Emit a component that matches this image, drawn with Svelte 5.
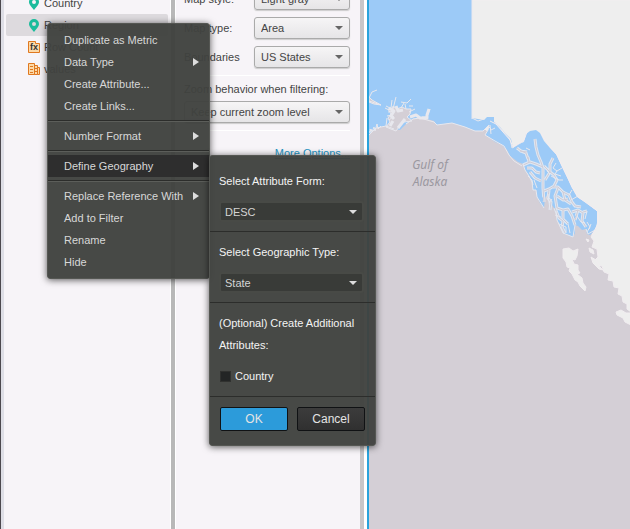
<script>
  let objects = [
    { name: 'Country', icon: 'geo' },
    { name: 'Region', icon: 'geo', selected: true },
    { name: 'Row Count', icon: 'metric' },
    { name: 'values', icon: 'attribute' }
  ];

  let mapOptions = [
    { id: 'map-style', label: 'Map style:', value: 'Light gray' },
    { id: 'map-type', label: 'Map type:', value: 'Area' },
    { id: 'boundaries', label: 'Boundaries', value: 'US States' }
  ];

  let menuGroups = [
    [
      { label: 'Duplicate as Metric' },
      { label: 'Data Type', sub: true },
      { label: 'Create Attribute...' },
      { label: 'Create Links...' }
    ],
    [{ label: 'Number Format', sub: true }],
    [{ label: 'Define Geography', sub: true, open: true }],
    [
      { label: 'Replace Reference With', sub: true },
      { label: 'Add to Filter' },
      { label: 'Rename' },
      { label: 'Hide' }
    ]
  ];

  // straits and sounds of the panhandle, drawn twice: light banks, then water
  let straits = [
    'M535 139l1 8 2 8 3 7 2 6 0 20 1 14',
    'M517 148l4 3 5 2 2 6M520 151l7 1M543 167l-7-3-6-2-7 3M529 162l-1-5',
    'M527 168l5 0 4 4 4 1M530 172l5 6 6 3',
    'M553 158l-3 6 0 8-5 8M544 191l5-2 5-3 3-6-3-5-4-3-6-6',
    'M553 187l5 0 5 5 6 3 3 7 3 4 6 1M558 188l-3 8 2 12 6 2 5-1 4 7 3 9',
    'M549 190l-1 8 3 4-1 8M557 196l6 4 5-1M563 192l2 8 6 4',
    'M563 210l0 9 5 5M572 212l6-2 5 3-1 8 4 6M578 210l-3 10M583 212l4-1',
    'M555 208l4 10 4 3-1 6 3 6'
  ];

  let country = false;
</script>

<div class="app">
  <aside class="objects">
    <ul>
      {#each objects as object}
        <li class:selected={object.selected}>
          {#if object.icon === 'geo'}
            <svg width="12" height="14" viewBox="0 0 12 14">
              <path
                fill="#1abc9c"
                fill-rule="evenodd"
                d="M6 1a5 5 0 0 0-5 5c0 3 3 5 5 8 2-3 5-5 5-8a5 5 0 0 0-5-5zm0 3a2 2 0 1 1 0 4 2 2 0 0 1 0-4z"
              />
            </svg>
          {:else if object.icon === 'metric'}
            <svg width="12" height="14" viewBox="0 0 12 14">
              <path fill="#fcd9a8" stroke="#e07820" d="M.5 1.500h7v2h4v9H.5z" />
              <text x="2" y="10">fx</text>
            </svg>
          {:else}
            <svg width="12" height="14" viewBox="0 0 12 14">
              <path
                fill="#fcd9a8"
                stroke="#e07820"
                d="M.5 1.500h6v11h-6zM6.500 3.500h3v9h-3zM9.500 5.500h2v7h-2zM2 4.500h3M2 7.500h3M2 10.500h3M7 6.500h2M7 9.500h2"
              />
            </svg>
          {/if}
          <span>{object.name}</span>
        </li>
      {/each}
    </ul>
  </aside>

  <section class="properties">
    {#each mapOptions as option}
      <div class="field">
        <label for={option.id}>{option.label}</label>
        <div class="select">
          <select id={option.id}><option>{option.value}</option></select>
        </div>
      </div>
    {/each}
    <div class="zoom">
      <label for="zoom">Zoom behavior when filtering:</label>
      <div class="select">
        <select id="zoom"><option>Keep current zoom level</option></select>
      </div>
    </div>
    <a href="#more">More Options...</a>
  </section>

  <main class="map">
    <svg viewBox="369 0 261 529" preserveAspectRatio="xMinYMin slice">
      <rect x="369" width="261" height="529" fill="#d4cfd6" />
      <!-- Canada -->
      <path
        class="land"
        d="M472 0H631V312L627 309 627 304 623 302 622 296 618 294 619 288 614 287 613 281 608 280 609 274 604 272 602 266 597 265 595 260 598 257 597 249 592 247 594 241 591 237 594 231 580 215 540 160 512 150 472 119z"
      />
      <path
        class="land"
        d="M563 249l6-1 4 3 5-2-1 7-2 4-3-1 2 5 4 1 0 5 2 3-3 1 5 4 1 5 3 4-1 4-5-5-2-4-3-2-3-6-3-3 1-3-3-1-1-5-3-4zM616 312l5-2 5 3 5 0v12l-6-3-2-4-6-3zM586 239l3 1-1 2zM589 248l4 2 1 4-4-2zM591 257l5 3 4 7 3 3-4-1-6-6z"
      />
      <!-- Alaska -->
      <path
        class="state"
        d="M369 0H472V118L478 119 484 120 487 117H494V122L500 127 505 133 511 139 513 148 518 144 524 142 526 134 530 131 536 130 540 133 544 141 550 148 556 154 561 165 567 177 572 188 577 197 585 202 594 209 597 211 597 223 595 230 590 235 587 234 586 229 582 230 578 226 575 225 575 233 573 237 568 235 563 233 560 226 557 220 556 211 552 205 551 210 549 205 548 194 545 198 544 208 540 203 537 197 536 190 533 190 532 182 529 176 525 170 523 164 518 162 510 156 507 150 502 145 495 142 490 138 485 135 488 130 489 125 483 131 475 131 465 127 452 123 437 125 434 121 420 117 412 119 406 124 400 130 394 129 386 126 376 128 369 135z"
      />
      <!-- Prince William Sound -->
      <path
        class="bay"
        d="M386 127l4-5-2-4 3-4-3-5 4 1 1-4 4 3 5-2 4 2 5 0-1 5-3 3 5 4-8 1-5 5-3 4z"
      />
      <path class="bay" d="M369 97l3 3 9 5-7-1-5-2z" />
      <path
        class="inlet wide"
        d="M389 108l5 3-3 5 3 3M396 106l2 5 5-1M390 126l3-5M410 117l6-2 4 3 7 0 0-3 2-6M398 128l7-9"
      />
      <path
        class="inlet"
        d="M377 90l-5 2-3 6M369 101l12 4M386 106l6 3M393 109l2-8 1-4M388 112l7-1M385 108l4 2M387 116l5-1M389 120l5-4M387 118l-1 8M411 99l-4 4-6-1M405 104l1 5M415 109l-6 3M409 106l4 0M430 109l-3 8-5 0M401 108l3-5M392 100l-1 8M369 133l2-4 1 3 2-5 1 4 2-7 1 5 3-3M370 129l1 4M490 125l1 9M491 129l-3-3M491 130l4-2"
      />
      <!-- Alexander Archipelago -->
      {#each straits as d}
        <path class="bank" {d} />
      {/each}
      {#each straits as d}
        <path class="strait" {d} />
      {/each}
      <path
        class="inlet"
        d="M556 163l-3 5 4 3-2 3 6 2M551 176l8 4 4 0M562 168l-5 3M572 190l-3 5M571 200l7-4M526 148l4 2M528 176l4 4 1 5M534 180l3 8M549 203l3-4M555 215l6 2M559 224l7 3 0 6M568 224l2 9M587 211l-2 8M577 216l4 6 4 1M587 222l3 5-3 5M591 224l-2 5M547 171l3 3"
      />
      <path class="state" d="M538 197l2-3 3 4 0 4zM546 158l3 2-2 3zM560 203l4 2-4 2zM574 215l2 1-2 3z" />
      <path
        class="shore"
        d="M369 135l7-7 10-2 8 3M406 124l7-5 7-1 14 4 3 3 15-2 13 4 10 4 8 0 6-6-1 5-3 5 10 6 9 5 5 9 5 6 8 5M472 0V119M472 118l6 3 6-2M495 122l15 17 2 9 12-7M523 164l2 6 4 6 3 6 1 8 3 0 1 7 7 11M548 194l2 16M556 211l1 9 6 13 5 2 5 2 2-12M586 229l2 5 7-4"
      />
      <path
        class="halo"
        d="M490 121l6 3 14 16 3 7 11-7 3-8M541 133l9 14 7 8 15 32 6 10 17 12 3 3 0 12-6 11"
      />
      <text x="430" y="169">Gulf of</text>
      <text x="430" y="186">Alaska</text>
    </svg>
  </main>

  <div class="menu context" role="menu">
    {#each menuGroups as group}
      <div class="group">
        {#each group as item}
          <button role="menuitem" class:open={item.open}>
            {item.label}
            {#if item.sub}
              <svg width="6" height="8" viewBox="0 0 6 8"><path fill="#ddd" d="M0 0l6 4-6 4z" /></svg>
            {/if}
          </button>
        {/each}
      </div>
    {/each}
  </div>

  <form class="menu geography">
    <div class="block">
      <label for="form">Select Attribute Form:</label>
      <div class="select dark">
        <select id="form"><option>DESC</option></select>
      </div>
    </div>
    <div class="block">
      <label for="type">Select Geographic Type:</label>
      <div class="select dark">
        <select id="type"><option>State</option></select>
      </div>
    </div>
    <div class="block">
      <p>(Optional) Create Additional Attributes:</p>
      <label class="check">
        <input type="checkbox" bind:checked={country} />
        Country
      </label>
    </div>
    <div class="actions">
      <button type="button" class="primary">OK</button>
      <button type="button">Cancel</button>
    </div>
  </form>
</div>

<style>
  :global(body) {
    overflow: hidden;
  }
  .app {
    position: relative;
    display: flex;
    height: 100vh;
    overflow: hidden;
    box-sizing: border-box;
    border-left: 1px solid #4c484e;
    background: #f7f4f8;
    color: #444;
    font-family: 'Liberation Sans', Arial, sans-serif;
    font-size: 11px;
  }
  button,
  select {
    font-family: inherit;
    font-size: 11px;
  }
  .objects {
    flex: 0 0 170px;
    box-sizing: border-box;
    border-left: 3px solid #dedee6;
    border-right: 1px solid #fff;
  }
  ul {
    list-style: none;
    margin: -8px 2px 0;
    padding: 0;
  }
  li {
    display: flex;
    align-items: center;
    gap: 4px;
    height: 22px;
    padding-left: 22px;
    border-radius: 2px;
  }
  li.selected {
    background: #dddade;
  }
  li text {
    font-size: 9px;
    font-weight: bold;
    fill: #333;
  }
  .properties {
    flex: 0 0 193px;
    box-sizing: border-box;
    padding: 0 10px 0 9px;
    border-left: 4px solid #b8b8b8;
    border-right: 4px solid #c8c6c8;
    box-shadow: inset 1px 0 #fff;
  }
  .field {
    display: flex;
    align-items: center;
    justify-content: space-between;
    margin-bottom: 7px;
  }
  .field:first-child {
    margin-top: -12px;
  }
  .field .select {
    width: 96px;
  }
  .select {
    position: relative;
  }
  .select::after {
    content: '';
    position: absolute;
    right: 7px;
    top: 9px;
    border: 4px solid transparent;
    border-top: 4px solid #666;
    border-bottom: 0;
    pointer-events: none;
  }
  select {
    display: block;
    appearance: none;
    width: 100%;
    height: 22px;
    padding: 0 6px;
    border: 1px solid #aaa;
    border-radius: 3px;
    background: linear-gradient(#f6f5f6, #e6e5e7);
    color: #444;
    box-shadow: 0 1px 1px #ccc;
  }
  .zoom {
    padding: 6px 0 7px;
    border-top: 1px solid #fff;
    border-bottom: 1px solid #fff;
  }
  .zoom label {
    display: block;
    line-height: 14px;
    margin-bottom: 5px;
  }
  .properties a {
    display: block;
    margin-top: 16px;
    text-align: right;
    color: #1f94c4;
  }
  .map {
    flex: 1;
    min-width: 0;
    border-left: 2px solid #29a3dc;
    margin-left: 3px;
    box-shadow: -3px 0 #fff;
  }
  .map svg {
    display: block;
    width: 100%;
    height: 100%;
  }
  .land {
    fill: #eee;
    stroke: #f1edf0;
  }
  .state {
    fill: #9ccaf7;
  }
  .bay {
    fill: #d4cfd6;
    stroke: #e8e8ee;
  }
  .inlet,
  .bank,
  .strait,
  .shore,
  .halo {
    fill: none;
    stroke: #e8e8ee;
    stroke-linejoin: round;
  }
  .inlet.wide {
    stroke-width: 3;
  }
  .bank {
    stroke: #dfe7f2;
    stroke-width: 3;
  }
  .strait {
    stroke: #cfccd6;
  }
  .halo {
    stroke: #f4edf0;
  }
  .map text {
    fill: #9b98a0;
    font-family: 'Noto Sans', sans-serif;
    font-size: 12px;
    font-style: italic;
    text-anchor: middle;
  }
  .menu {
    position: absolute;
    box-sizing: border-box;
    border: 1px solid #555753;
    border-radius: 3px;
    background: rgba(64, 66, 62, 0.96);
    box-shadow: 0 1px 7px rgba(0, 0, 0, 0.65);
  }
  .context {
    left: 46px;
    top: 23px;
    width: 163px;
    padding: 5px 0;
  }
  .group + .group {
    margin-top: 3px;
    padding-top: 4px;
    border-top: 1px solid #2c2d2b;
    box-shadow: inset 0 1px #5c5e5a;
  }
  .group button {
    display: flex;
    align-items: center;
    justify-content: space-between;
    width: 100%;
    height: 22px;
    padding: 0 10px 0 16px;
    border: 0;
    background: none;
    color: #d8d8d8;
    white-space: nowrap;
  }
  .group button.open {
    background: #2e2e2e;
  }
  .geography {
    left: 208px;
    top: 155px;
    width: 167px;
    color: #f4f4f4;
  }
  .block {
    padding: 14px 11px 9px 9px;
    border-bottom: 1px solid #2c2d2b;
  }
  .block > label {
    display: block;
    line-height: 22px;
    margin-bottom: 9px;
  }
  .block + .block {
    padding-top: 9px;
  }
  .dark select {
    height: 21px;
    border: 2px solid #484a46;
    padding: 0 4px;
    background: #393b38;
    color: #d4d4d4;
    box-shadow: none;
  }
  .dark::after {
    border-top-color: #ddd;
  }
  p {
    margin: 0 0 9px;
    line-height: 22px;
  }
  .block .check {
    display: flex;
    align-items: center;
    gap: 4px;
    margin: 0;
  }
  .check input {
    appearance: none;
    width: 11px;
    height: 11px;
    margin: 0 0 0 1px;
    border: 1px solid #30312f;
    background: #232525;
  }
  .check input:checked {
    background: #29a3dc;
  }
  .actions {
    display: flex;
    gap: 9px;
    padding: 10px 10px 14px;
  }
  .actions button {
    flex: 1;
    height: 24px;
    padding: 0;
    border: 1px solid #101214;
    border-radius: 2px;
    background: linear-gradient(#3c3c3c, #303030);
    color: #e4e4e4;
    font-size: 12px;
  }
  .actions .primary {
    background: #2c9bda;
  }
</style>
